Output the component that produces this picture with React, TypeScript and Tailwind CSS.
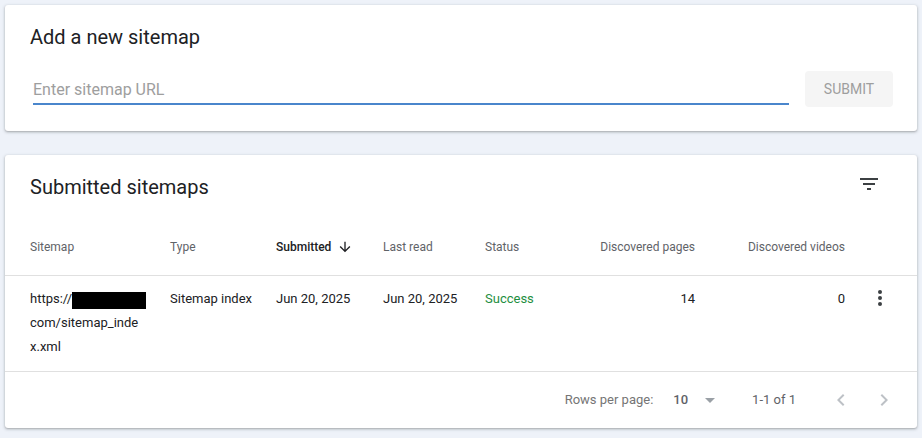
const font = { fontFamily: "Roboto, 'Liberation Sans', sans-serif" }

const columns = "grid grid-cols-[165px_106px_107px_102px_100px_110px_150px_72px]"

const FilterIcon = () => (
  <svg viewBox="0 0 24 24" className="h-6 w-6 fill-[#3c4043]">
    <path d="M10 18h4v-2h-4v2zM3 6v2h18V6H3zm3 7h12v-2H6v2z" />
  </svg>
)

const ArrowDown = () => (
  <svg viewBox="0 0 24 24" className="h-4 w-4 fill-[#202124]">
    <path d="M20 12l-1.41-1.41L13 16.17V4h-2v12.17l-5.58-5.59L4 12l8 8 8-8z" />
  </svg>
)

const MoreIcon = () => (
  <svg viewBox="0 0 24 24" className="h-6 w-6 fill-[#3c4043]">
    <circle cx="12" cy="6" r="2" />
    <circle cx="12" cy="12" r="2" />
    <circle cx="12" cy="18" r="2" />
  </svg>
)

export default function App() {
  return (
    <div className="h-[438px] w-[922px] overflow-hidden bg-[#eef2f9] px-[5px] pt-[5px]" style={font}>
      {/* add sitemap */}
      <div className="h-[126px] rounded-[3px] bg-white pt-[18px] pb-6 shadow-[0_1px_2px_rgba(60,64,67,0.3),0_1px_3px_1px_rgba(60,64,67,0.12)]">
        <h2 className="h-7 pl-[25px] text-[20px] leading-7 text-[#202124]">Add a new sitemap</h2>
        <div className="mt-5 flex items-center gap-4 pr-6 pl-[28px]">
          <input
            placeholder="Enter sitemap URL"
            className="h-8 flex-1 border-b-2 border-[#4a86cc] bg-transparent pt-[3px] text-[16px] text-[#202124] outline-none placeholder:text-[#9e9e9e]"
          />
          <button className="h-9 w-[88px] rounded-[4px] bg-[#f5f5f5] text-[14px] text-[#9e9e9e]">
            SUBMIT
          </button>
        </div>
      </div>

      {/* submitted sitemaps */}
      <div className="mt-6 h-[273px] rounded-[3px] bg-white pt-[18px] shadow-[0_1px_2px_rgba(60,64,67,0.3),0_1px_3px_1px_rgba(60,64,67,0.12)]">
        <div className="flex h-7 items-start justify-between pr-9 pl-[25px]">
          <h2 className="text-[20px] leading-7 text-[#202124]">Submitted sitemaps</h2>
          <div className="-mt-px">
            <FilterIcon />
          </div>
        </div>

        <div className={`${columns} mt-[18px] h-[57px] items-center border-b border-[#e0e0e0] text-[12px] text-[#5f6368]`}>
          <div className="pl-[25px]">Sitemap</div>
          <div>Type</div>
          <div className="flex items-center font-medium text-[#202124]">
            Submitted
            <span className="ml-[6px]">
              <ArrowDown />
            </span>
          </div>
          <div>Last read</div>
          <div>Status</div>
          <div className="text-right">Discovered pages</div>
          <div className="text-right">Discovered videos</div>
          <div />
        </div>

        <div className={`${columns} h-[96px] border-b border-[#e0e0e0] pt-[11px] text-[13px] leading-6 text-[#202124]`}>
          <div className="pl-[25px]">
            <div className="flex h-6 items-start">
              <span>https://</span>
              <span className="mt-[5px] h-[17px] w-[74px] bg-black" />
            </div>
            <div>com/sitemap_inde</div>
            <div>x.xml</div>
          </div>
          <div>Sitemap index</div>
          <div>Jun 20, 2025</div>
          <div>Jun 20, 2025</div>
          <div className="text-[#1e8e3e]">Success</div>
          <div className="text-right">14</div>
          <div className="text-right">0</div>
          <div className="-mt-px pl-[23px]">
            <MoreIcon />
          </div>
        </div>

        <div className="flex h-14 items-center justify-end pr-[21px] text-[13px]">
          <span className="text-[#757575]">Rows per page:</span>
          <span className="ml-[20px] font-medium text-[#5f6368]">10</span>
          <svg viewBox="0 0 24 24" className="ml-[10px] h-6 w-6 fill-[#9aa0a6]">
            <path d="M7 10l5 5 5-5z" />
          </svg>
          <span className="ml-[30px] text-[#5f6368]">1-1 of 1</span>
          <svg viewBox="0 0 24 24" className="ml-[33px] h-6 w-6 fill-[#bdc1c6]">
            <path d="M15.41 7.41L14 6l-6 6 6 6 1.41-1.41L10.83 12z" />
          </svg>
          <svg viewBox="0 0 24 24" className="ml-[19px] h-6 w-6 fill-[#bdc1c6]">
            <path d="M10 6L8.59 7.41 13.17 12l-4.58 4.59L10 18l6-6z" />
          </svg>
        </div>
      </div>
    </div>
  )
}
